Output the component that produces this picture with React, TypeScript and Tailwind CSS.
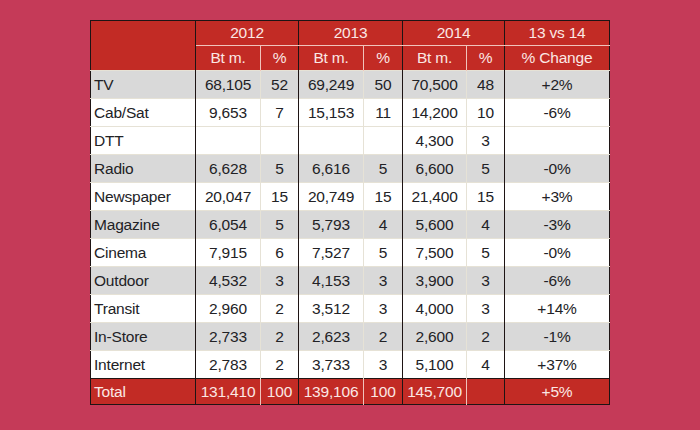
const widths = [105, 65, 38, 65, 39, 64, 38, 105];

type Row = { name: string; cells: string[]; grey: boolean };

const rows: Row[] = [
  { name: 'TV', cells: ['68,105', '52', '69,249', '50', '70,500', '48', '+2%'], grey: true },
  { name: 'Cab/Sat', cells: ['9,653', '7', '15,153', '11', '14,200', '10', '-6%'], grey: false },
  { name: 'DTT', cells: ['', '', '', '', '4,300', '3', ''], grey: false },
  { name: 'Radio', cells: ['6,628', '5', '6,616', '5', '6,600', '5', '-0%'], grey: true },
  { name: 'Newspaper', cells: ['20,047', '15', '20,749', '15', '21,400', '15', '+3%'], grey: false },
  { name: 'Magazine', cells: ['6,054', '5', '5,793', '4', '5,600', '4', '-3%'], grey: true },
  { name: 'Cinema', cells: ['7,915', '6', '7,527', '5', '7,500', '5', '-0%'], grey: false },
  { name: 'Outdoor', cells: ['4,532', '3', '4,153', '3', '3,900', '3', '-6%'], grey: true },
  { name: 'Transit', cells: ['2,960', '2', '3,512', '3', '4,000', '3', '+14%'], grey: false },
  { name: 'In-Store', cells: ['2,733', '2', '2,623', '2', '2,600', '2', '-1%'], grey: true },
  { name: 'Internet', cells: ['2,783', '2', '3,733', '3', '5,100', '4', '+37%'], grey: false },
];

const total = ['131,410', '100', '139,106', '100', '145,700', '', '+5%'];

// even index cells (Bt m. columns + change) start a group -> dark left rule
const bodyBorder = (i: number) =>
  i % 2 === 0 ? 'border-l border-l-[#1e1414]' : 'border-l border-l-[#e6e2d6]';
const redBorder = (i: number) =>
  i % 2 === 0 ? 'border-l border-l-[#1e1414]' : 'border-l border-l-[#f0c4bc]';

export default function App() {
  return (
    <div className="flex h-[430px] w-[700px] justify-center bg-[#c53a58] pt-[20px]">
      <table className="h-[384px] table-fixed border-collapse border border-[#1e1414] font-['Liberation_Sans',Arial,sans-serif] text-[15.5px] leading-none tracking-[-0.2px]">
        <colgroup>
          {widths.map((w, i) => (
            <col key={i} style={{ width: w }} />
          ))}
        </colgroup>
        <thead className="bg-[#c22b25] text-[#fbe7e4]">
          <tr className="h-[25px]">
            <th rowSpan={2} className="border-r border-r-[#1e1414] font-normal" />
            {['2012', '2013', '2014', '13 vs 14'].map((y, i) => (
              <th
                key={y}
                colSpan={i === 3 ? 1 : 2}
                className="border-b border-b-[#f0c4bc] border-l border-l-[#1e1414] text-center font-normal"
              >
                {y}
              </th>
            ))}
          </tr>
          <tr className="h-[25px]">
            {['Bt m.', '%', 'Bt m.', '%', 'Bt m.', '%', '% Change'].map((h, i) => (
              <th key={i} className={`${redBorder(i)} text-center font-normal`}>
                {h}
              </th>
            ))}
          </tr>
        </thead>
        <tbody className="text-[#222226]">
          {rows.map((r) => (
            <tr
              key={r.name}
              className={`h-[28px] border-t border-t-[#e6e2d6] ${r.grey ? 'bg-[#d9d9d9]' : 'bg-white'}`}
            >
              <td className="border-r border-r-[#1e1414] pl-[3px] text-left">{r.name}</td>
              {r.cells.map((c, i) => (
                <td key={i} className={`${bodyBorder(i)} text-center`}>
                  {c}
                </td>
              ))}
            </tr>
          ))}
          <tr className="h-[26px] border-t border-t-[#1e1414] bg-[#c22b25] text-[#fbe7e4]">
            <td className="border-r border-r-[#1e1414] pl-[3px] text-left">Total</td>
            {total.map((c, i) => (
              <td key={i} className={`${redBorder(i)} text-center`}>
                {c}
              </td>
            ))}
          </tr>
        </tbody>
      </table>
    </div>
  );
}
